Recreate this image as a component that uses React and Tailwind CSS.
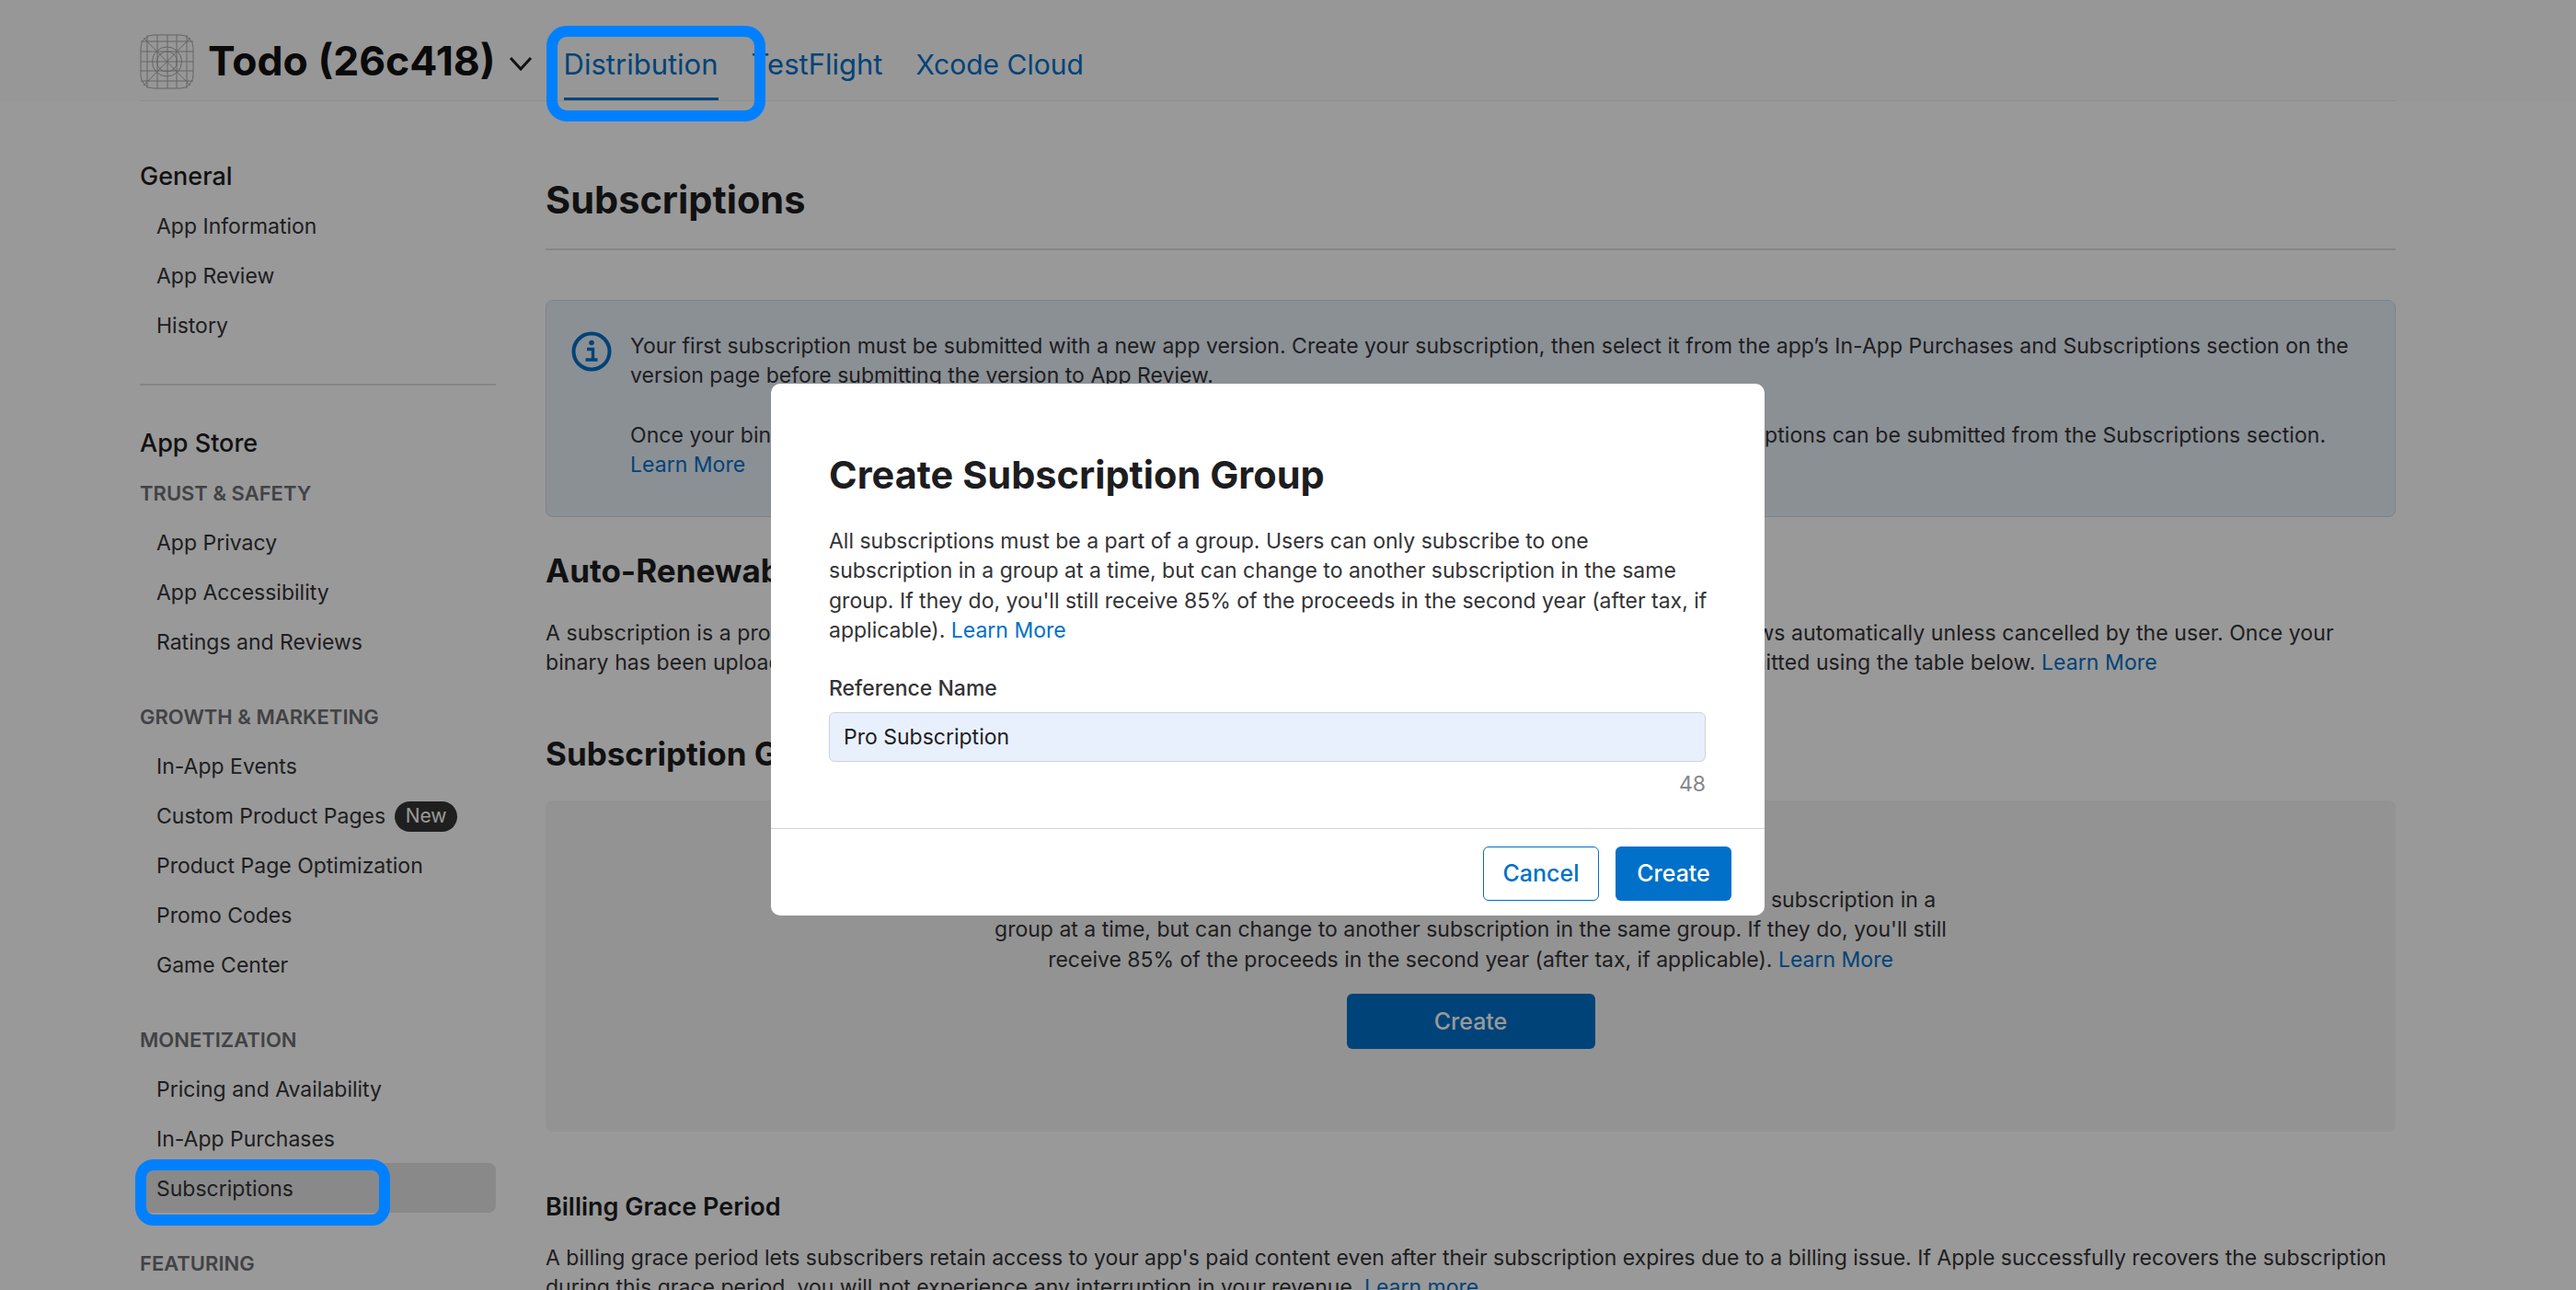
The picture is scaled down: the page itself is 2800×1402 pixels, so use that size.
const font = { fontFamily: "Inter, 'Liberation Sans', sans-serif" };

const generalItems = ["App Information", "App Review", "History"];

const storeGroups = [
  { label: "TRUST & SAFETY", items: ["App Privacy", "App Accessibility", "Ratings and Reviews"] },
  {
    label: "GROWTH & MARKETING",
    items: ["In-App Events", "Custom Product Pages", "Product Page Optimization", "Promo Codes", "Game Center"],
  },
  { label: "MONETIZATION", items: ["Pricing and Availability", "In-App Purchases", "Subscriptions"] },
  { label: "FEATURING", items: [] },
];

function AppIcon() {
  const lines = [8, 19, 30, 40, 51];
  return (
    <svg width="59" height="60" viewBox="0 0 59 60" fill="none" stroke="#a8a8a8" strokeWidth="1">
      <rect x="1" y="1" width="57" height="58" rx="14" />
      {lines.map((p) => (
        <g key={p}>
          <line x1={p} y1="1" x2={p} y2="59" />
          <line x1="1" y1={p} x2="58" y2={p} />
        </g>
      ))}
      <line x1="4" y1="4" x2="55" y2="56" />
      <line x1="55" y1="4" x2="4" y2="56" />
      <circle cx="29.5" cy="30" r="16" />
      <circle cx="29.5" cy="30" r="11" />
    </svg>
  );
}

function InfoIcon() {
  return (
    <svg width="44" height="44" viewBox="0 0 44 44" fill="none">
      <circle cx="22" cy="22" r="19.5" stroke="#0070c9" strokeWidth="4" />
      <circle cx="22" cy="12.5" r="2.8" fill="#0070c9" />
      <path d="M17 19.5h6.5v11M15.5 31h13" stroke="#0070c9" strokeWidth="3.4" />
    </svg>
  );
}

function NavItem({ label }) {
  const selected = label === "Subscriptions";
  return (
    <div
      className={`h-[54px] flex items-center pl-[18px] pt-[2px] text-[23px] text-[#333336] rounded-lg ${selected ? "bg-[#e5e5e5]" : ""}`}
    >
      {label}
      {label === "Custom Product Pages" && (
        <span className="ml-[10px] h-[33px] w-[68px] flex items-center justify-center rounded-full bg-[#343434] text-white text-[21px]">
          New
        </span>
      )}
    </div>
  );
}

function Sidebar() {
  return (
    <aside className="w-[387px] shrink-0 pt-[54px]">
      <div className="h-[54px] flex items-center pt-[2px] text-[27px] font-medium text-[#1d1d1f]">General</div>
      {generalItems.map((i) => (
        <NavItem key={i} label={i} />
      ))}
      <div className="mt-[37px] mb-[35px] border-t-2 border-[#e0e0e0]" />
      <div className="h-[54px] flex items-center pt-[2px] text-[27px] font-medium text-[#1d1d1f]">App Store</div>
      {storeGroups.map((g, idx) => (
        <div key={g.label} className={idx ? "mt-[27px]" : ""}>
          <div className="h-[54px] flex items-center pt-[2px] text-[22px] font-semibold text-[#6e6e73]">{g.label}</div>
          {g.items.map((i) => (
            <NavItem key={i} label={i} />
          ))}
        </div>
      ))}
    </aside>
  );
}

function Link({ children }) {
  return <span className="text-[#0070c9]">{children}</span>;
}

function Main() {
  return (
    <main className="w-[2011px] ml-[54px] pt-[79px] text-[23px] leading-[32.4px] text-[#333336]">
      <h1 className="h-[56px] flex items-center text-[41.5px] font-bold text-[#1d1d1f]">Subscriptions</h1>
      <div className="mt-[25px] h-[2px] bg-[#e0e0e0]" />

      <div className="mt-[54px] h-[236px] flex gap-[20px] pl-[27px] pr-[40px] pt-[33px] rounded-lg border border-[#cfdbe6] bg-[#e8f0f8]">
        <div className="shrink-0">
          <InfoIcon />
        </div>
        <div className="whitespace-nowrap tracking-[0.03px]">
          <p>
            Your first subscription must be submitted with a new app version. Create your subscription, then select it
            from the app’s In-App Purchases and Subscriptions section on the
          </p>
          <p>version page before submitting the version to App Review.</p>
          <p className="mt-[32px] tracking-[0.06px]">
            Once your binary has been uploaded and your first subscription has been approved for review, additional
            subscriptions can be submitted from the Subscriptions section.
          </p>
          <p>
            <Link>Learn More</Link>
          </p>
        </div>
      </div>

      <h2 className="mt-[36px] h-[44px] flex items-center text-[35px] font-bold text-[#1d1d1f]">
        Auto-Renewable Subscriptions
      </h2>
      <div className="mt-[30px] whitespace-nowrap tracking-[0.08px]">
        <p>
          A subscription is a product that provides ongoing access to digital content or services over a set period of
          time and renews automatically unless cancelled by the user. Once your
        </p>
        <p>
          binary has been uploaded and your first subscription has been approved, your additional subscriptions can then
          be submitted using the table below. <Link>Learn More</Link>
        </p>
      </div>

      <h2 className="mt-[60px] h-[44px] flex items-center text-[35px] font-bold text-[#1d1d1f]">
        Subscription Groups
      </h2>
      <div className="mt-[29px] h-[360px] pt-[92px] rounded-lg bg-[#f5f5f5] flex flex-col items-center text-center">
        <p>All subscriptions must be a part of a group. Users can only subscribe to one subscription in a</p>
        <p>group at a time, but can change to another subscription in the same group. If they do, you'll still</p>
        <p>
          receive 85% of the proceeds in the second year (after tax, if applicable). <Link>Learn More</Link>
        </p>
        <button className="mt-[21px] w-[270px] h-[60px] rounded-md bg-[#0070c9] text-white text-[25px] font-medium">
          Create
        </button>
      </div>

      <h3 className="mt-[64px] h-[36px] flex items-center text-[27px] font-semibold text-[#1d1d1f]">
        Billing Grace Period
      </h3>
      <div className="mt-[21px] whitespace-nowrap">
        <p>
          A billing grace period lets subscribers retain access to your app's paid content even after their subscription
          expires due to a billing issue. If Apple successfully recovers the subscription
        </p>
        <p>
          during this grace period, you will not experience any interruption in your revenue. <Link>Learn more</Link>
        </p>
      </div>
    </main>
  );
}

function Modal() {
  return (
    <div className="absolute left-[838px] top-[417px] w-[1080px] h-[578px] rounded-[10px] bg-white flex flex-col text-[23px] leading-[32.4px] text-[#333336]">
      <div className="flex-1 pl-[63px] pr-[64px] pt-[73px]">
        <h2 className="h-[52px] flex items-center text-[41.5px] font-bold text-[#1d1d1f] whitespace-nowrap">
          Create Subscription Group
        </h2>
        <p className="mt-[30px] whitespace-nowrap">
          All subscriptions must be a part of a group. Users can only subscribe to one
          <br />
          subscription in a group at a time, but can change to another subscription in the same
          <br />
          group. If they do, you'll still receive 85% of the proceeds in the second year (after tax, if
          <br />
          applicable). <Link>Learn More</Link>
        </p>
        <div className="mt-[30px] font-medium">Reference Name</div>
        <div className="mt-[10px] h-[54px] flex items-center px-[15px] rounded-md border border-[#d2d2d7] bg-[#e8f0fe] text-[#1d1d1f]">
          Pro Subscription
        </div>
        <div className="mt-[8px] text-right text-[#86868b]">48</div>
      </div>
      <div className="h-[95px] border-t border-[#d2d2d7] flex justify-end gap-[18px] pt-[19px] pr-[36px] text-[25px]">
        <button className="w-[126px] h-[59px] rounded-md border border-[#0070c9] text-[#0070c9] font-medium">
          Cancel
        </button>
        <button className="w-[126px] h-[59px] rounded-md bg-[#0070c9] text-white font-medium">Create</button>
      </div>
    </div>
  );
}

export default function App() {
  return (
    <div className="relative w-[2800px] h-[1402px] overflow-hidden bg-white" style={font}>
      <div className="bg-[#fcfcfc] pl-[152px] pr-[196px]">
        <header className="h-[110px] border-b border-[#ececec] flex items-center">
          <div className="flex items-center pt-[24px]">
            <AppIcon />
            <span className="ml-[15px] text-[44.5px] font-bold text-[#111] leading-none whitespace-nowrap">
              Todo (26c418)
            </span>
            <svg className="ml-[14px] mt-[4px]" width="26" height="16" viewBox="0 0 26 16" fill="none">
              <path d="M2 2l11 12L24 2" stroke="#1d1d1f" strokeWidth="3" />
            </svg>
          </div>
          <nav className="ml-[34px] h-full flex gap-[36px] text-[31px] text-[#0070c9] whitespace-nowrap">
            <span className="h-full flex items-center pt-[35px] border-b-[3px] border-[#0070c9]">Distribution</span>
            <span className="h-full flex items-center pt-[32px]">TestFlight</span>
            <span className="h-full flex items-center pt-[32px] text-[30px]">Xcode Cloud</span>
          </nav>
        </header>
      </div>

      <div className="flex pl-[152px]">
        <Sidebar />
        <Main />
      </div>

      <div className="absolute inset-0 bg-black/40" />
      <Modal />

      <div className="absolute left-[594px] top-[28px] w-[238px] h-[104px] rounded-[22px] border-[12px] border-[#0080ff]" />
      <div className="absolute left-[147px] top-[1260px] w-[277px] h-[72px] rounded-[20px] border-[12px] border-[#0080ff]" />
    </div>
  );
}
